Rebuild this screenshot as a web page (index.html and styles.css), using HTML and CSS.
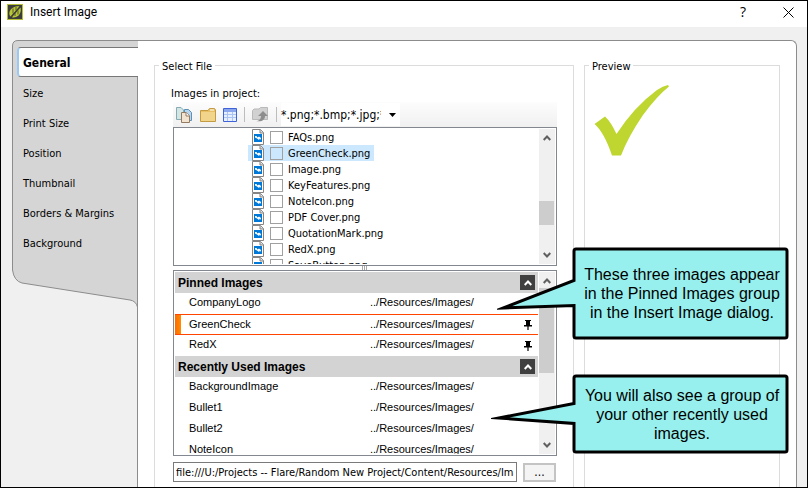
FILE: index.html
```html
<!DOCTYPE html>
<html lang="en">
<head>
<meta charset="utf-8">
<title>Insert Image</title>
<link rel="stylesheet" href="styles.css">
</head>
<body>
<svg class="defs" aria-hidden="true">
  <defs>
    <symbol id="file" viewBox="0 0 12 16">
      <path d="M.5.500H8.500L11.500 3.500V15.500H.5Z" fill="#fff" stroke="#858585"/>
      <path d="M8 .5V4H11.500" fill="#ddd" stroke="#858585"/>
      <path d="M2 5H10V13H2Z" fill="#0078d7"/>
      <path d="M3 7H4.500L5.500 8.500L7 7.500L9 9V11L8 9.500L7 11L5 9.500L3 8.500Z" fill="#fff"/>
    </symbol>
    <symbol id="up" viewBox="0 0 8 6"><path d="M.7 5L4 1.500L7.300 5" fill="none" stroke="currentColor" stroke-width="2"/></symbol>
    <symbol id="down" viewBox="0 0 8 6"><path d="M.7 1L4 4.500L7.300 1" fill="none" stroke="currentColor" stroke-width="2"/></symbol>
    <symbol id="pin" viewBox="0 0 8 10"><path d="M1 0H7V1H6V5H8V6.500H4.600V10H3.400V6.500H0V5H2V1H1Z" fill="#000"/></symbol>
  </defs>
</svg>
<div class="window">
  <header class="titlebar">
    <svg class="logo" viewBox="0 0 16 16" aria-hidden="true">
      <rect x=".5" y=".5" width="15" height="15" fill="#3c3c3c" stroke="#b2bf35"/>
      <path d="M12.600 2.200C8 2 3.500 4 2.500 8C2 10 2.600 12 3.800 12.800Z" fill="#b9c832"/>
      <path d="M13.500 3.500C14.500 7 13 11.500 9 13C7.500 13.500 6 13.500 5 13.200Z" fill="#b9c832"/>
      <path d="M2 14.500L13.500 2M6 4.500V9.500M9 3V6.500M8 12V9M11 10.500V6.500" fill="none" stroke="#3c3c3c" stroke-width=".8"/>
    </svg>
    <h1>Insert Image</h1>
    <button class="caption-button" type="button" aria-label="Help">?</button>
    <button class="caption-button" type="button" aria-label="Close">
      <svg width="11" height="11" viewBox="0 0 11 11"><path d="M.5.500L10.500 10.500M10.500.5L.5 10.500" stroke="#000" fill="none"/></svg>
    </button>
  </header>
  <div class="panel">
    <nav class="tabs">
      <svg class="tabs-shape" width="126" height="270" viewBox="0 0 126 270" aria-hidden="true">
        <path d="M126 .5H6Q.5.500.5 6V230Q2 241 10 243L118 260Q124 261 125.500 267L126 267Z" fill="#d5d5d5"/>
        <path d="M126 .5H6Q.5.500.5 6V230Q2 241 10 243L118 260Q124 261 125.500 267V29" fill="none" stroke="#8c8c8c"/>
      </svg>
      <a class="tab active" href="#general">General</a>
      <a class="tab" href="#size">Size</a>
      <a class="tab" href="#print">Print Size</a>
      <a class="tab" href="#position">Position</a>
      <a class="tab" href="#thumbnail">Thumbnail</a>
      <a class="tab" href="#borders">Borders &amp; Margins</a>
      <a class="tab" href="#background">Background</a>
    </nav>
    <main class="page">
      <section class="group select-file">
        <h2>Select File</h2>
        <p class="caption">Images in project:</p>
        <div class="toolbar">
          <button type="button" aria-label="Copy">
            <svg width="17" height="16" viewBox="0 0 17 16"><path d="M.5.500H5L7.500 3V12.500H.5Z" fill="#d3e6e6" stroke="#87abb0"/><path d="M8.500 2.500H12.500L15.500 5.500V13.500H8.500Z" fill="#b8d7ee" stroke="#5c91b8"/><path d="M5.500 5.500H10L13.500 8.500V15.500H5.500Z" fill="#f3e4d2" stroke="#927a63"/><path d="M10 5.500V9H13.500" fill="#fff" stroke="#927a63"/></svg>
          </button>
          <button type="button" aria-label="Folder">
            <svg width="16" height="14" viewBox="0 0 16 14"><path d="M.5 2.500H8L9.500.5H14.500L15.500 2V13.500H.5Z" fill="#e8c164" stroke="#c49a42"/><path d="M1 4H15V13H1Z" fill="#f1d58a"/><path d="M10 2H14" stroke="#fff"/></svg>
          </button>
          <button type="button" aria-label="Grid">
            <svg width="14" height="14" viewBox="0 0 14 14"><path d="M.5.500H13.500V13.500H.5Z" fill="#e6f0ff" stroke="#3f62d8"/><path d="M1 1H13V4H1Z" fill="#8ba7ee"/><path d="M1 6.500H13M1 9.500H13M4.500 4V13M9.500 4V13" stroke="#a9c4f5" fill="none"/></svg>
          </button>
          <span class="divider"></span>
          <button type="button" aria-label="Up one level">
            <svg width="17" height="15" viewBox="0 0 17 15"><path d="M.5 3.500L2 2H7L8.500.5H15.500V12.500H.5Z" fill="#d1d1d1" stroke="#b9b9b9"/><path d="M4 14C7 14 9 12 9 9H6L11 4L16 9H13C13 13 10 15 4 14Z" fill="#8d8d8d"/></svg>
          </button>
          <span class="divider"></span>
          <button class="filter" type="button"><span class="filter-text">*.png;*.bmp;*.jpg;*.gif</span><svg width="7" height="4" viewBox="0 0 7 4"><path d="M0 0H7L3.500 4Z"/></svg></button>
        </div>
        <div class="box tree">
          <div class="rows">
            <label class="item"><svg class="file"><use href="#file"/></svg><input type="checkbox"><span>FAQs.png</span></label>
            <label class="item selected"><svg class="file"><use href="#file"/></svg><input type="checkbox"><span>GreenCheck.png</span></label>
            <label class="item"><svg class="file"><use href="#file"/></svg><input type="checkbox"><span>Image.png</span></label>
            <label class="item"><svg class="file"><use href="#file"/></svg><input type="checkbox"><span>KeyFeatures.png</span></label>
            <label class="item"><svg class="file"><use href="#file"/></svg><input type="checkbox"><span>NoteIcon.png</span></label>
            <label class="item"><svg class="file"><use href="#file"/></svg><input type="checkbox"><span>PDF Cover.png</span></label>
            <label class="item"><svg class="file"><use href="#file"/></svg><input type="checkbox"><span>QuotationMark.png</span></label>
            <label class="item"><svg class="file"><use href="#file"/></svg><input type="checkbox"><span>RedX.png</span></label>
            <label class="item"><svg class="file"><use href="#file"/></svg><input type="checkbox"><span>SaveButton.png</span></label>
          </div>
          <div class="scrollbar"><svg class="arrow"><use href="#up"/></svg><div class="track"><div class="thumb tree-thumb"></div></div><svg class="arrow"><use href="#down"/></svg></div>
        </div>
        <div class="splitter"><i></i><i></i><i></i></div>
        <div class="box recent">
          <div class="rows">
            <div class="list-head"><h3>Pinned Images</h3><button type="button" aria-label="Collapse pinned images"><svg width="8" height="6"><use href="#up"/></svg></button></div>
            <div class="entry"><span>CompanyLogo</span><span>../Resources/Images/</span></div>
            <div class="entry current"><span>GreenCheck</span><span>../Resources/Images/</span><svg class="pin"><use href="#pin"/></svg></div>
            <div class="entry"><span>RedX</span><span>../Resources/Images/</span><svg class="pin"><use href="#pin"/></svg></div>
            <div class="list-head"><h3>Recently Used Images</h3><button type="button" aria-label="Collapse recent images"><svg width="8" height="6"><use href="#up"/></svg></button></div>
            <div class="entry"><span>BackgroundImage</span><span>../Resources/Images/</span></div>
            <div class="entry"><span>Bullet1</span><span>../Resources/Images/</span></div>
            <div class="entry"><span>Bullet2</span><span>../Resources/Images/</span></div>
            <div class="entry"><span>NoteIcon</span><span>../Resources/Images/</span></div>
          </div>
          <div class="scrollbar"><svg class="arrow"><use href="#up"/></svg><div class="track"><div class="thumb recent-thumb"></div></div><svg class="arrow"><use href="#down"/></svg></div>
        </div>
        <div class="path-row">
          <input type="text" aria-label="Image path" value="file:///U:/Projects -- Flare/Random New Project/Content/Resources/Images/GreenCheck.png">
          <button type="button" aria-label="Browse">...</button>
        </div>
      </section>
      <section class="group preview">
        <h2>Preview</h2>
        <svg class="check" width="76" height="71" viewBox="0 0 76 71" role="img" aria-label="Green check"><path d="M.5 39L11 31.500Q17 37 22.500 49Q40 22 63 5Q69 1 74 0L75 1.500Q63 11 49 30Q34 52 27 70.500H18Q10 47 .5 39Z" fill="#bed62f"/></svg>
      </section>
    </main>
  </div>
</div>
<aside class="callout pinned-note">
  <svg width="292" height="93" viewBox="0 0 292 93" aria-hidden="true"><path d="M79 2H288Q290 2 290 4V89Q290 91 288 91H79Q77 91 77 89V58.500L6 61L77 33.500V4Q77 2 79 2Z" fill="#97f0ed" stroke="#000" stroke-width="3" stroke-miterlimit="10"/></svg>
  <p>These three images appear in the Pinned Images group in the Insert Image dialog.</p>
</aside>
<aside class="callout recent-note">
  <svg width="298" height="80" viewBox="0 0 298 80" aria-hidden="true"><path d="M85 2H294Q296 2 296 4V76Q296 78 294 78H85Q83 78 83 76V49.500L8 44L83 29.500V4Q83 2 85 2Z" fill="#97f0ed" stroke="#000" stroke-width="3" stroke-miterlimit="10"/></svg>
  <p>You will also see a group of your other recently used images.</p>
</aside>
</body>
</html>
```
FILE: styles.css
```css
* { box-sizing: border-box; }
html, body { height: 100%; }
body {
  margin: 0;
  overflow: hidden;
  font: 11px/16px "DejaVu Sans Condensed", "DejaVu Sans", sans-serif;
  color: #000;
}
h1, h2, h3, p { margin: 0; font-weight: normal; font-size: inherit; }
button { margin: 0; padding: 0; border: 0; background: none; font: inherit; color: inherit; }
svg { display: block; flex: none; }
.defs { position: absolute; width: 0; height: 0; }

.window {
  height: 100%;
  border: 1px solid #000;
  background: #f0f0f0;
  display: flex;
  flex-direction: column;
}
.titlebar {
  flex: none;
  height: 26px;
  padding: 0 0 4px 6px;
  background: #fff;
  display: flex;
  align-items: center;
  gap: 7px;
}
.logo { width: 16px; height: 16px; }
.titlebar h1 { flex: 1; font: 12px/16px Roboto, sans-serif; }
.caption-button { width: 38px; display: grid; place-items: center; font: 14px/16px "Open Sans", sans-serif; }

.panel {
  flex: 1;
  min-height: 0;
  margin: 13px 10px 0 11px;
  display: flex;
}
.tabs { position: relative; width: 126px; flex: none; padding-top: 7px; z-index: 1; }
.tabs-shape { position: absolute; left: 0; top: 0; }
.tab {
  position: relative;
  display: block;
  height: 30px;
  margin-left: 5px;
  padding: 9px 0 0 6px;
  color: #000;
  text-decoration: none;
}
.tab.active {
  background: #fff;
  border: 1px solid #777;
  border-left: 2px solid #99c9f5;
  border-right: 0;
  border-radius: 4px 0 0 4px;
  padding: 7px 0 0 4px;
  font-size: 12px;
  font-weight: bold;
}
.page {
  flex: 1;
  min-width: 0;
  margin-left: -1px;
  padding: 24px 16px 0;
  background: #fff;
  border: 1px solid #8c8c8c;
  border-bottom: 0;
  border-radius: 0 6px 0 0;
  display: grid;
  grid-template-columns: minmax(0, 420fr) minmax(0, 196fr);
  gap: 10px;
  overflow: hidden;
}
.group { border: 1px solid #dcdcdc; border-bottom: 0; }
.group h2 { width: max-content; margin: -7px 0 0 4px; padding: 0 3px; background: #fff; }
.select-file { display: flex; flex-direction: column; }
.caption { padding: 11px 0 0 16px; }

.toolbar {
  margin: 0 16px 0 18px;
  height: 25px;
  flex: none;
  display: flex;
  align-items: center;
  gap: 7px;
  padding-left: 3px;
  background: linear-gradient(#fdfdfd, #f0f0f0);
}
.divider { width: 1px; height: 15px; background: #bdbdbd; }
.filter { display: flex; align-items: center; height: 23px; margin-left: -3px; background: #fff; padding-right: 4px; gap: 8px; }
.filter-text { width: 100px; overflow: hidden; white-space: nowrap; font-size: 12px; text-align: left; }

.box { flex: none; margin: 0 16px 0 18px; padding: 1px; border: 1px solid #828790; background: #fff; display: flex; }
.rows { flex: 1; min-width: 0; overflow: hidden; }
.tree { height: 139px; }
.item { display: flex; align-items: center; width: max-content; height: 16px; margin-left: 73px; padding: 0 4px; }
.item span { padding-top: 2px; }
.item.selected { background: #cce8ff; }
.file { width: 12px; height: 16px; }
.item input { appearance: none; width: 13px; height: 13px; margin: 0 5px 0 6px; border: 1px solid #a0a0a0; }

.scrollbar { width: 16px; flex: none; background: #f0f0f0; color: #606060; display: flex; flex-direction: column; align-items: center; padding: 6px 0; }
.arrow { width: 8px; height: 6px; }
.track { flex: 1; width: 100%; padding: 4px 1px 0 0; }
.thumb { background: #cdcdcd; }
.tree-thumb { height: 24px; margin-top: 56px; }
.recent-thumb { height: 85px; }

.splitter { height: 4px; flex: none; display: flex; justify-content: center; gap: 1px; }
.splitter i { width: 1px; background: #aaa; }

.recent { height: 186px; font: 11px/18px "Liberation Sans", sans-serif; }
.recent .rows { padding-right: 1px; }
.list-head { display: flex; align-items: center; height: 21px; padding: 0 3px; background: #d3d3d3; }
.list-head h3 { flex: 1; padding-top: 1px; font-size: 12px; font-weight: bold; }
.list-head button { width: 15px; height: 15px; display: grid; place-items: center; background: #404040; color: #fff; }
.entry { display: grid; grid-template-columns: 181px 1fr 14px; height: 21px; padding-left: 14px; }
.entry.current { background: linear-gradient(90deg, #ff6a00, #ff8c00) left / 6px 100% no-repeat; border-top: 1px solid #ff4500; border-bottom: 1px solid #ff4500; }
.pin { width: 8px; height: 10px; align-self: center; }

.path-row { display: flex; align-items: center; gap: 6px; margin: 6px 17px 0 18px; }
.path-row input { flex: 1; min-width: 0; height: 20px; padding: 0 2px; border: 1px solid #7a7a7a; border-radius: 0; font: inherit; color: #000; }
.path-row button { width: 33px; height: 19px; border: 2px solid #c4c4c4; background: #f4f4f4; font-size: 12px; line-height: 15px; }
.check { margin: 10px 0 0 9px; }

.callout { position: absolute; right: 19px; z-index: 2; }
.callout p {
  position: absolute;
  inset: 0 0 0 auto;
  width: 214px;
  padding: 18px 6px;
  text-align: center;
  font: 16px/19px "Liberation Sans", sans-serif;
}
.pinned-note { top: 247px; }
.recent-note { top: 374px; }
.recent-note p { padding-top: 12px; }
```
